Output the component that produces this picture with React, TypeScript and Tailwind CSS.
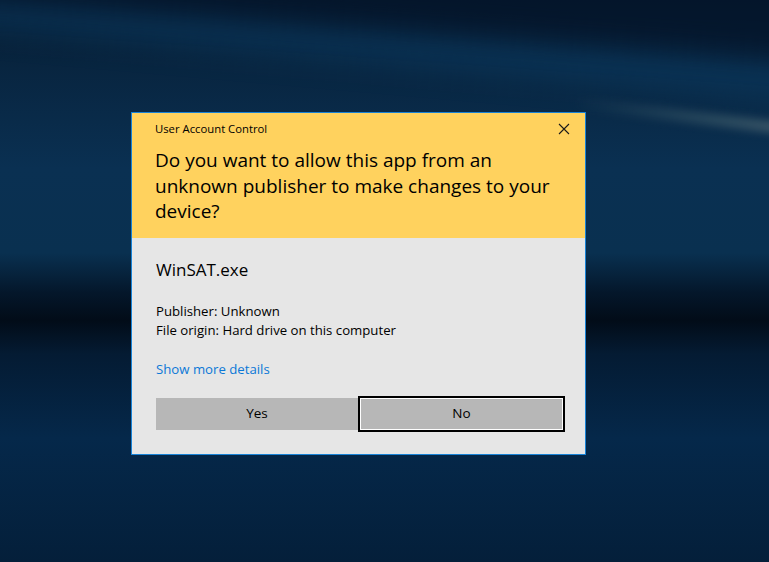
import React from "react";

function CloseIcon() {
  return (
    <svg width="12" height="12" viewBox="0 0 12 12" className="block">
      <path d="M1 1 L11 11 M11 1 L1 11" stroke="#1a1a1a" strokeWidth="1.1" fill="none" />
    </svg>
  );
}

function UacDialog() {
  return (
    <div className="w-[455px] border border-[#1883d7] bg-[#e6e6e6] text-black">
      <div className="bg-[#ffd25e] pl-[23px] pb-[13px]">
        <div className="flex h-[31px] items-center justify-between pr-[15px]">
          <span className="text-[11.3px] leading-none">User Account Control</span>
          <CloseIcon />
        </div>
        <h1 className="mt-[4px] pr-[10px] text-[19px] leading-[25.5px] font-normal">
          Do you want to allow this app from an unknown publisher to make changes to your device?
        </h1>
      </div>
      <div className="pl-[24px] pr-[20px] pt-[18px] pb-[22px]">
        <div className="text-[17px] leading-[28px]">WinSAT.exe</div>
        <div className="mt-[18px] text-[13.2px] leading-[19px]">
          <div>Publisher: Unknown</div>
          <div>File origin: Hard drive on this computer</div>
        </div>
        <div className="mt-[20px] text-[13.2px] leading-[19px] text-[#0b78d7]">Show more details</div>
        <div className="mt-[17px] flex h-[36px] items-center">
          <button className="h-[32px] w-[202px] shrink-0 bg-[#b7b7b7] text-[13.5px]">Yes</button>
          <button className="h-[36px] w-[207px] shrink-0 border-2 border-black bg-[#b7b7b7] text-[13.5px] shadow-[inset_0_0_0_1px_#ffffff]">
            No
          </button>
        </div>
      </div>
    </div>
  );
}

export default function App() {
  return (
    <div className="relative h-[562px] w-[769px] overflow-hidden bg-[linear-gradient(180deg,#061a2e_0%,#082540_12%,#0a3052_30%,#093050_45%,#04172b_52%,#020c18_57%,#041b33_63%,#05284a_78%,#041f3a_100%)] font-['Open_Sans',sans-serif]">
      {/* wallpaper light streaks */}
      <div className="pointer-events-none absolute left-[-60px] top-[10px] h-[70px] w-[900px] rotate-[5deg] bg-[linear-gradient(180deg,transparent,#0b3a60_50%,transparent)] opacity-70 blur-[10px]" />
      <div className="pointer-events-none absolute left-[570px] top-[112px] h-[12px] w-[260px] rotate-[7deg] bg-[linear-gradient(90deg,transparent,#3a5868_60%,#5f727b)] opacity-70 blur-[4px]" />
      <div className="pointer-events-none absolute left-[-40px] top-[-60px] h-[90px] w-[900px] rotate-[4deg] bg-[#04142a] opacity-70 blur-[14px]" />
      <div className="relative flex h-full items-start pl-[131px] pt-[112px]">
        <UacDialog />
      </div>
    </div>
  );
}
